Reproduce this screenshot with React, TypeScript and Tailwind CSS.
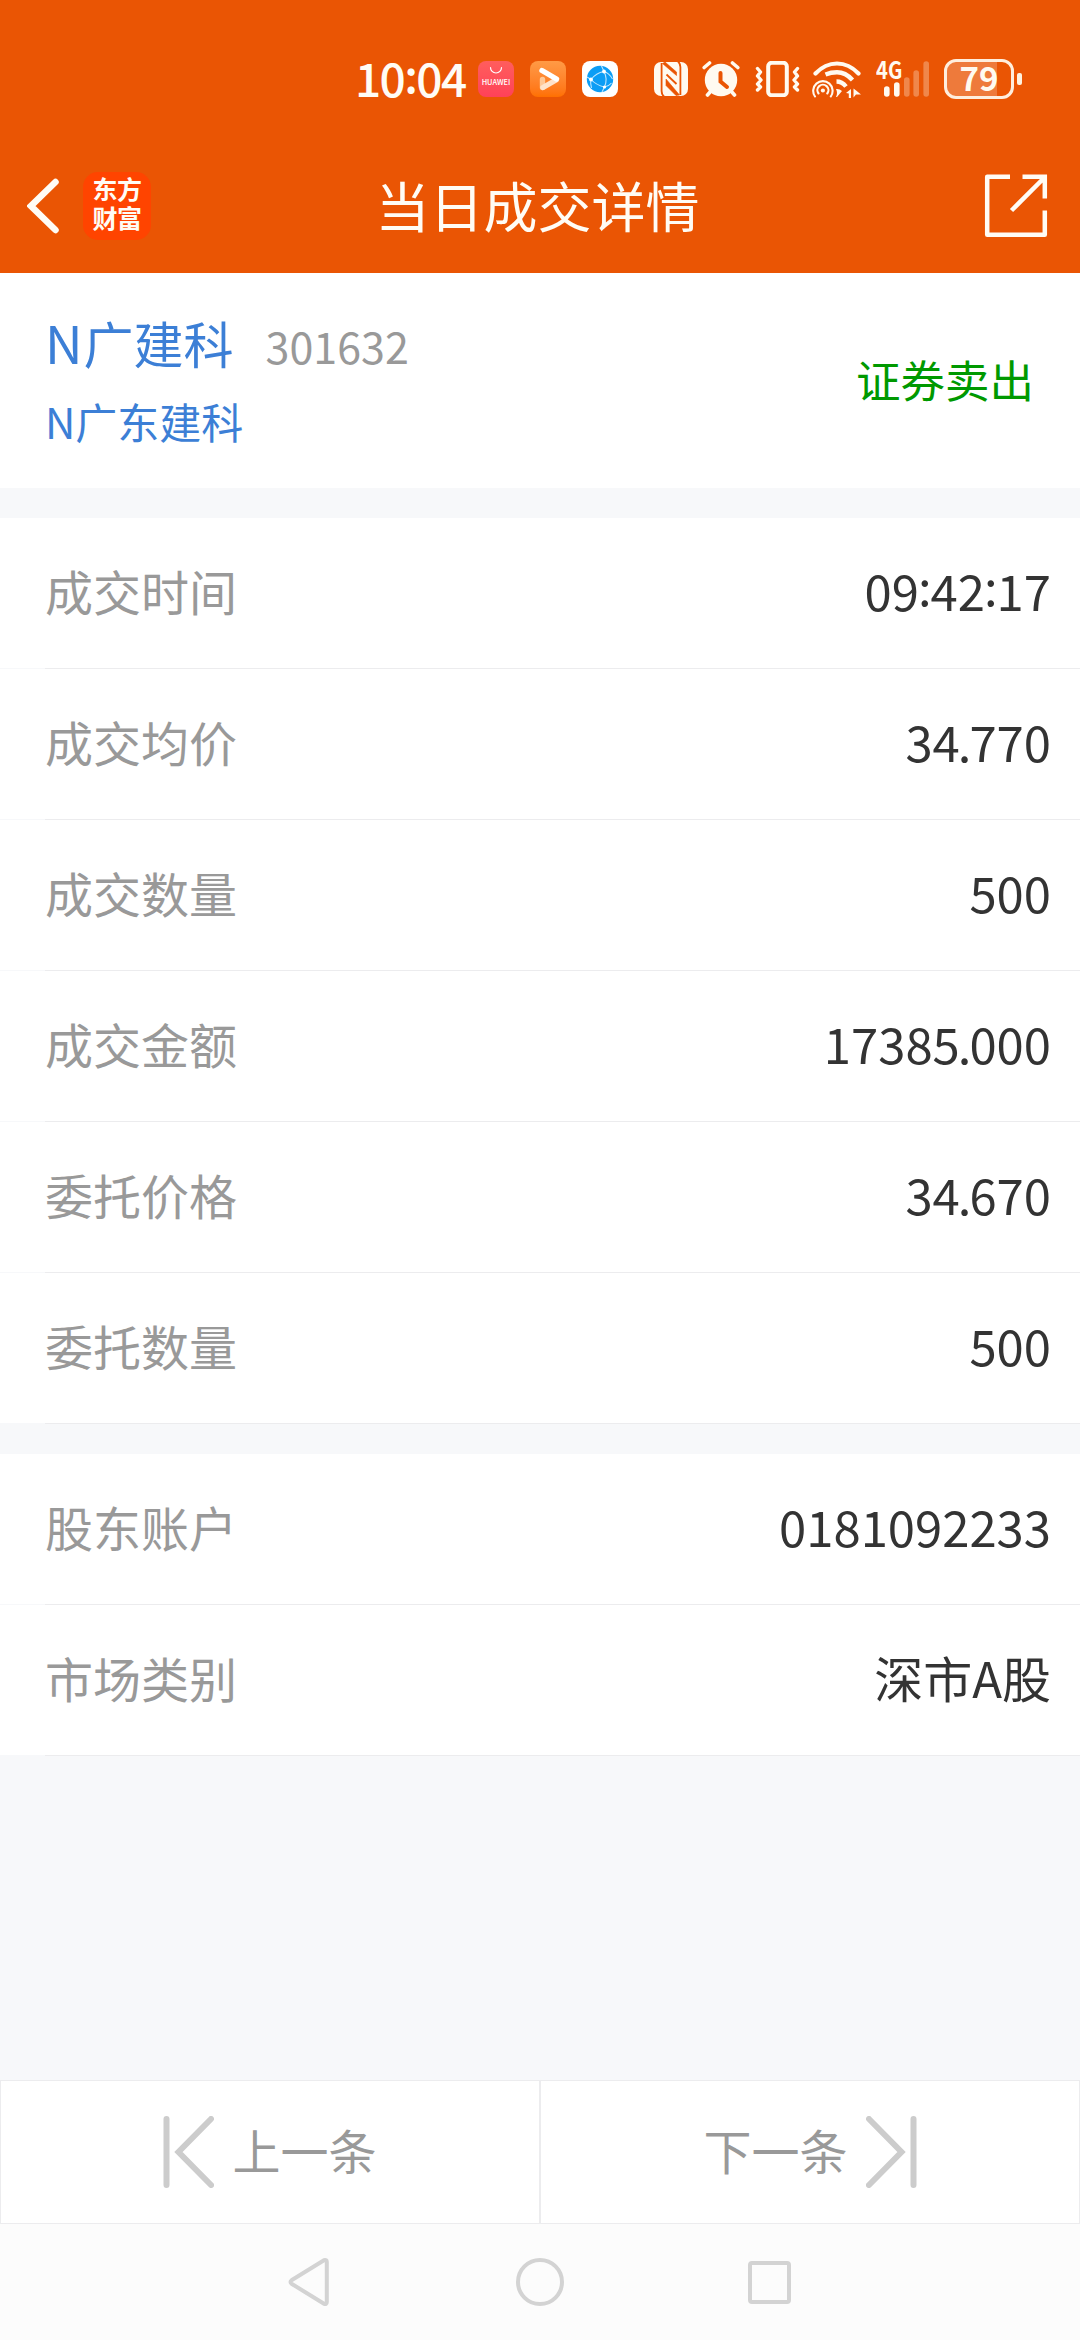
import type { ReactNode } from "react";

type DetailItem = {
  label: string;
  value: string;
};

const tradeItems: DetailItem[] = [
  { label: "成交时间", value: "09:42:17" },
  { label: "成交均价", value: "34.770" },
  { label: "成交数量", value: "500" },
  { label: "成交金额", value: "17385.000" },
  { label: "委托价格", value: "34.670" },
  { label: "委托数量", value: "500" },
];

const accountItems: DetailItem[] = [
  { label: "股东账户", value: "0181092233" },
  { label: "市场类别", value: "深市A股" },
];

function AppBadges() {
  return (
    <div className="ml-[12px] flex gap-4">
      <div className="flex h-9 w-9 flex-col items-center rounded-[8px] bg-linear-to-b from-[#ff5d5d] to-[#ff4158] pt-[5px] text-white">
        <svg width="14" height="8" viewBox="0 0 14 8" fill="none" stroke="currentColor" strokeWidth="1.2" strokeLinecap="round">
          <path d="M1.5 1.5a5.5 5.5 0 0 0 11 0" />
        </svg>
        <span className="mt-[3px] text-[7.4px] leading-[9px] font-medium">HUAWEI</span>
      </div>
      <div className="h-9 w-9 rounded-[8px] bg-linear-to-b from-[#ff9a45] to-[#ff7000]">
        <svg width="36" height="36" viewBox="0 0 36 36" fill="none" strokeLinecap="round" strokeWidth="5.4">
          <path d="M12.5 18.5v8" stroke="#ffc896" />
          <path d="M13 26.5L26 19" stroke="#ffe3ca" />
          <path d="M12 9.5L26.5 18" stroke="#fff" />
        </svg>
      </div>
      <div className="h-9 w-9 rounded-[8px] bg-white">
        <svg width="36" height="36" viewBox="0 0 36 36" fill="none">
          <circle cx="18" cy="18" r="13.2" fill="#0c9df5" />
          <path stroke="#bfe6ff" strokeWidth="1.1" d="M9 18.5Q14 12 22 10.5Q26 18 22.5 26Q14 24 9 18.5M22 10.5L19.5 5M22 10.5Q27 12 30.5 18M22.5 26L20 31M22.5 26Q27 25 29.5 22M9 18.5L5 16M9 18.5Q8 22 9.5 27" />
          <g fill="#fff">
            <circle cx="9" cy="18.5" r="1.9" />
            <circle cx="22" cy="10.5" r="1.9" />
            <circle cx="22.5" cy="26" r="1.6" />
          </g>
        </svg>
      </div>
    </div>
  );
}

function StatusIcons() {
  return (
    <div className="ml-9 flex items-center text-[#fffaf0]">
      {/* nfc */}
      <svg width="34" height="34" viewBox="0 0 34 34" fill="none">
        <rect width="34" height="34" rx="7" fill="currentColor" />
        <g stroke="#ea5504" strokeWidth="1.8">
          <path d="M7.6 1V29Q7.6 32.5 10 34.5M26.4 33V5Q26.4 1.5 24 -0.5" />
          <path fill="#ea5504" d="M8.5 1.5L22.5 13.5V10L11 0ZM12 17L25.500 33L22 33.500L12 23.500Z" strokeWidth="0.6" />
          <path d="M12.5 12.5L22.500 22" />
        </g>
      </svg>
      {/* alarm */}
      <svg className="ml-[14px]" width="38" height="36" viewBox="0 0 38 36" fill="none" stroke="currentColor" strokeLinecap="round">
        <circle cx="19" cy="19" r="16.2" fill="currentColor" stroke="none" />
        <path strokeWidth="3.6" d="M2.2 6.5L7.5 2M35.8 6.5L30.5 2M5.5 34L9 30M32.5 34L29 30" />
        <path stroke="#ea5504" strokeWidth="4" d="M18.5 12V20.5L25 26" />
      </svg>
      {/* vibrate */}
      <svg className="ml-[15px]" width="45" height="36" viewBox="0 0 45 36" fill="none" stroke="currentColor">
        <rect x="13.2" y="1.8" width="18.6" height="32.4" rx="3.5" strokeWidth="4" />
        <path strokeWidth="3.4" strokeLinecap="round" strokeLinejoin="round" d="M2.5 7.5L5.5 11L2.5 15L6 19L2.5 23L5.5 26L2.5 29M42.5 7.5L39.5 11L42.5 15L39 19L42.5 23L39.5 26L42.5 29" />
      </svg>
      {/* wifi with hotspot */}
      <svg className="ml-3" width="49" height="37" viewBox="0 0 49 37" fill="none" stroke="currentColor" strokeLinecap="round">
        <path strokeWidth="4.2" d="M3.5 12.5Q13 2.5 25 2.5T46.5 12.5" />
        <path strokeWidth="4.4" strokeLinecap="butt" d="M13.5 13.5Q19 11.3 25 11.3Q33.5 11.3 40.5 19M24.5 20.5Q30 20.5 34 25.5" />
        <path strokeWidth="2.1" d="M3 35.5A9.7 9.7 0 1 1 18.8 35.5M6.5 32.5A5.5 5.5 0 1 1 15.3 32.5" />
        <circle cx="10.9" cy="29.5" r="2.1" fill="currentColor" stroke="none" />
        <path fill="currentColor" stroke="none" d="M24 28Q27.5 27.5 30 30L25 36H24Q26 32 24 28ZM34 32L39 28V37H36.8V32.5ZM41.5 27.5V36.5L44 33.5H49L43.5 29Z" />
      </svg>
      {/* signal */}
      <div className="relative ml-[15px] h-9 w-[53px]">
        <span className="absolute -top-[6px] left-0 origin-left scale-x-[.84] text-[24px] leading-[28px] font-bold">4G</span>
        <svg width="53" height="36" viewBox="0 0 53 36" stroke="currentColor" strokeWidth="5.6" strokeLinecap="round">
          <path d="M10.8 28V33M20.8 24V33" />
          <path opacity=".3" d="M30.8 19V33M40.2 12V33M50.2 3V33" />
        </svg>
      </div>
      {/* battery */}
      <div className="ml-[15px] flex h-10 w-[70px] rounded-[12px] border-[3px] border-[#ffeedd] bg-linear-to-r from-[#ee7a3b] from-78% to-[#ea5504] to-78%">
        <span className="flex w-full items-center justify-center pb-[4px] text-[33px] leading-none font-bold">79</span>
      </div>
      <div className="ml-[3px] h-[12px] w-[5px] rounded-[2px] bg-[#fff3e0]" />
    </div>
  );
}

function Header() {
  return (
    <header className="bg-[#ea5504] text-[#fffcf5]">
      <div className="flex h-[139px] items-center pt-[19px] pl-[355px]">
        <span className="w-[111px] pb-[5px] text-[46px] leading-none font-medium tracking-[-1.6px] whitespace-nowrap">
          10<span className="relative -top-1">:</span>04
        </span>
        <AppBadges />
        <StatusIcons />
      </div>
      <div className="grid h-[134px] grid-cols-[1fr_auto_1fr] items-center pr-[32px] pl-[27px]">
        <div className="flex items-center gap-6">
          <svg width="32" height="56" viewBox="0 0 32 56" fill="none" stroke="currentColor" strokeWidth="6.5">
            <path strokeLinecap="round" d="M28.5 4L4 28L28.5 52" />
          </svg>
          <div className="h-[68px] w-[68px] rounded-[15px] bg-[#ff4400] pt-[2px] text-center text-[25px] leading-[29px] font-bold tracking-[-0.5px]">
            东方
            <br />
            财富
          </div>
        </div>
        <h1 className="pb-[3px] text-[54px] leading-none">当日成交详情</h1>
        <svg className="justify-self-end" width="64" height="64" viewBox="0 0 64 64" fill="none" stroke="currentColor" strokeWidth="4.5">
          <path strokeLinejoin="round" d="M26 2.7H3.2V60.8H60.8V36.5" />
          <path d="M38.5 2.7H60.8V24.5M27.5 36.5L60 4" />
        </svg>
      </div>
    </header>
  );
}

// Punctuation sits tighter than the digits, and colons are centred on them.
function ValueText({ value }: { value: string }) {
  return (
    <span className="pb-[7px] text-[49px] leading-none text-[#333]">
      {value.split(/([:.])/).map((part, index) => {
        if (part === ":") {
          return (
            <span key={index} className="relative -top-[5px] -mx-px">
              :
            </span>
          );
        }
        if (part === ".") {
          return (
            <span key={index} className="-mx-[2px]">
              .
            </span>
          );
        }
        return part;
      })}
    </span>
  );
}

function DetailRow({ label, value }: DetailItem) {
  return (
    <div className="flex h-[151px] bg-white">
      <div className="w-[45px] border-b border-[#f7f8fa]" />
      <div className="flex flex-1 items-center justify-between border-b border-[#ececee] pr-[29px]">
        <span className="pb-[6px] text-5xl leading-none text-[#999]">{label}</span>
        <ValueText value={value} />
      </div>
    </div>
  );
}

function PagerButton({ children }: { children: ReactNode }) {
  return (
    <button className="flex flex-1 items-center justify-center gap-[18px] border border-[#ececee] bg-white text-5xl leading-none text-[#999]">
      {children}
    </button>
  );
}

export default function App() {
  return (
    <div className="flex h-[2340px] w-[1080px] flex-col bg-[#f7f8fa] font-['Noto_Sans_CJK_SC',sans-serif]">
      <Header />

      <section className="flex h-[215px] items-center justify-between bg-white pr-[46px] pl-[45px]">
        <div className="pt-[2px] text-[#3c7fd6]">
          <div className="flex h-[79px] items-baseline leading-[79px]">
            <span className="text-[50px]">
              <span className="mr-px text-[52px]">N</span>广建科
            </span>
            <span className="ml-[32px] text-[43px] text-[#999]">301632</span>
          </div>
          <div className="text-[42px] leading-[80px]">N广东建科</div>
        </div>
        <span className="pb-[3px] text-[44.5px] leading-none text-[#090]">证券卖出</span>
      </section>

      <section className="mt-[30px]">
        {tradeItems.map((item) => (
          <DetailRow key={item.label} {...item} />
        ))}
      </section>

      <section className="mt-[30px]">
        {accountItems.map((item) => (
          <DetailRow key={item.label} {...item} />
        ))}
      </section>

      <div className="mt-auto flex h-[144px]">
        <PagerButton>
          <svg width="51" height="72" viewBox="0 0 51 72" fill="none" stroke="#ccc" strokeWidth="6" strokeLinecap="round">
            <path d="M3.5 3V69M48 3L15.5 36L48 69" />
          </svg>
          <span className="pb-[6px]">上一条</span>
        </PagerButton>
        <PagerButton>
          <span className="pb-[6px]">下一条</span>
          <svg width="51" height="72" viewBox="0 0 51 72" fill="none" stroke="#ccc" strokeWidth="6" strokeLinecap="round">
            <path d="M47.5 3V69M3 3L35.5 36L3 69" />
          </svg>
        </PagerButton>
      </div>

      <nav className="flex h-[116px] items-center bg-[#fcfcfc] pl-[288px]">
        <svg width="41" height="48" viewBox="0 0 41 48" fill="none" stroke="#d3d3d3" strokeWidth="4" strokeLinejoin="round">
          <path d="M2.5 24Q2.5 23 3.5 22.3L36 2.2Q38.8 1.5 38.8 4V44Q38.8 46.5 36 45.8L3.5 25.7Q2.5 25 2.5 24Z" />
        </svg>
        <div className="ml-[187px] h-12 w-12 rounded-full border-4 border-[#d3d3d3]" />
        <div className="ml-[184px] h-[43px] w-[43px] rounded-[4px] border-4 border-[#d3d3d3]" />
      </nav>
    </div>
  );
}
